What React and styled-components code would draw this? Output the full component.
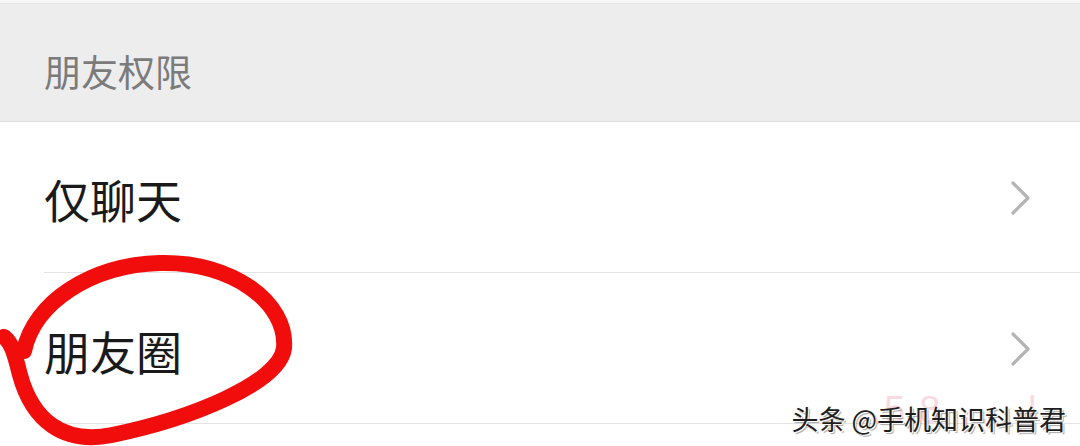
import React from "react";
import styled, { createGlobalStyle } from "styled-components";

const Global = createGlobalStyle`
  html, body { margin: 0; padding: 0; background: #ffffff; }
  body { font-family: "Noto Sans CJK SC", "Noto Sans", sans-serif; }
`;

const Page = styled.div`
  position: relative;
  width: 1080px;
  height: 446px;
  overflow: hidden;
  background: #ffffff;
  border-top: 3px solid #f7f7f7;
  box-sizing: border-box;
`;

const SectionHeader = styled.div`
  height: 119px;
  background: #ededed;
  border-top: 1px solid #e4e4e4;
  border-bottom: 1px solid #dcdcdc;
  display: flex;
  align-items: center;
  padding: 16px 0 0 44px;
  box-sizing: border-box;
  font-size: 37px;
  color: #7b7b7b;
`;

const List = styled.div`
  display: flex;
  flex-direction: column;
`;

const Row = styled.div`
  height: 151px;
  display: flex;
  align-items: center;
  justify-content: space-between;
  padding: 0 48px 0 44px;
  box-sizing: border-box;
  position: relative;
  &::after {
    content: "";
    position: absolute;
    left: 44px;
    right: 0;
    bottom: 0;
    height: 1px;
    background: #e3e3e3;
  }
`;

const Label = styled.span`
  font-size: 46px;
  color: #1a1a1a;
  padding-top: ${(p) => p.$shift || 0}px;
`;

const Chevron = () => (
  <svg width="22" height="34" viewBox="0 0 22 34">
    <path d="M3 2 L18 17 L3 32" fill="none" stroke="#b4b4b4" strokeWidth="3.2" strokeLinecap="round" strokeLinejoin="round" />
  </svg>
);

const Annotation = styled.svg`
  position: absolute;
  left: 0;
  top: 0;
  pointer-events: none;
`;

const Watermark = styled.div`
  position: absolute;
  right: 14px;
  bottom: 14px;
  font-size: 27px;
  line-height: 1;
  color: #1e1e1e;
  text-shadow: 1px 1px 0 #ffffff, 2px 2px 1px rgba(0, 0, 0, 0.35);
  white-space: nowrap;
`;

const Faint = styled.div`
  position: absolute;
  left: 884px;
  top: 388px;
  font-family: "Liberation Sans", sans-serif;
  font-size: 38px;
  line-height: 1;
  color: rgba(235, 120, 150, 0.28);
  letter-spacing: 14px;
  white-space: nowrap;
`;

export default function App() {
  return (
    <>
      <Global />
      <Page>
        <SectionHeader>朋友权限</SectionHeader>
        <List>
          <Row>
            <Label>仅聊天</Label>
            <Chevron />
          </Row>
          <Row>
            <Label $shift={2}>朋友圈</Label>
            <Chevron />
          </Row>
        </List>
        <Faint>58 . l</Faint>
        <Watermark>头条 @手机知识科普君</Watermark>
        <Annotation width="1080" height="446" viewBox="0 0 1080 446">
          <path
            d="M24 348 C 34 300, 90 262, 160 260 C 232 258, 288 300, 284 345 C 280 380, 190 416, 112 432 C 62 442, 32 416, 20 372 C 15 352, 12 340, 4 334"
            fill="none"
            stroke="#f20d0d"
            strokeWidth="16"
            strokeLinecap="round"
            strokeLinejoin="round"
          />
        </Annotation>
      </Page>
    </>
  );
}
